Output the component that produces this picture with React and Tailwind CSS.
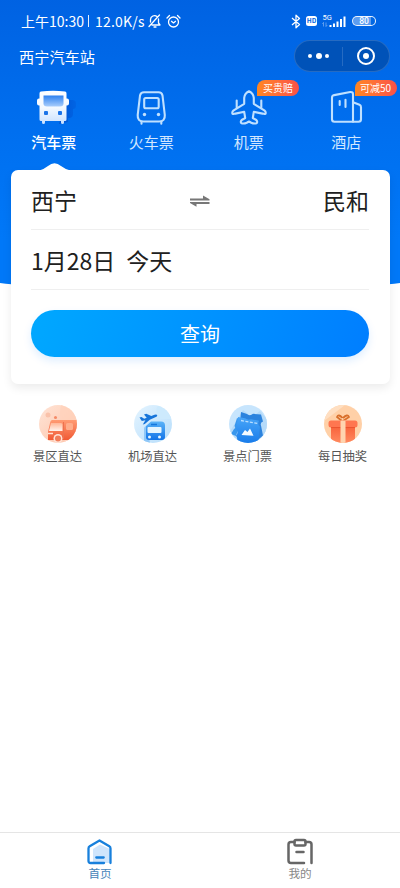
import React from "react";

function BusIcon() {
  return (
    <svg width="44" height="38" viewBox="32 89 44 38" fill="none">
      <defs>
        <linearGradient id="busBody" x1="0" y1="0" x2="0" y2="1">
          <stop offset="0" stopColor="#ffffff" />
          <stop offset="0.5" stopColor="#f4f9ff" />
          <stop offset="1" stopColor="#c9e0ff" />
        </linearGradient>
        <linearGradient id="busGlass" x1="0" y1="0" x2="0" y2="1">
          <stop offset="0" stopColor="#2f82ef" />
          <stop offset="1" stopColor="#a8cdfc" />
        </linearGradient>
        <linearGradient id="busShade" x1="0" y1="0" x2="1" y2="0">
          <stop offset="0" stopColor="#0049c8" />
          <stop offset="1" stopColor="#0062e2" />
        </linearGradient>
      </defs>
      <path d="M66 100h6.500a3.500 3.500 0 0 1 3.500 3.500v2.500a3 3 0 0 1-3 3v5a4 4 0 0 1-4 4h-1v4l-9 2z" fill="url(#busShade)" opacity=".75" />
      <path d="M41 91.500q12-1.500 24 0 1.500.2 1.500 2v5h.5q2 0 2 2v3q0 2-2 2h-.5v14q0 1.500-1.500 1.500h-1v1.500q0 1.500-1.500 1.500t-1.500-1.500V121H45v1.500q0 1.500-1.500 1.500t-1.500-1.500V121h-1q-1.500 0-1.500-1.500v-14H39q-2 0-2-2v-3q0-2 2-2h.5v-5q0-1.800 1.500-2z" fill="url(#busBody)" />
      <path d="M43.500 95.500h20v8q0 3-3.500 3H47q-3.500 0-3.500-3z" fill="url(#busGlass)" />
      <rect x="44" y="111" width="4" height="4" rx="1" fill="#1b73e8" />
      <rect x="58" y="111" width="4" height="4" rx="1" fill="#1b73e8" />
    </svg>
  );
}

function TrainIcon() {
  return (
    <svg width="34" height="38" viewBox="134 89 34 38" fill="none" stroke="#bfe0ff" strokeWidth="2.100" strokeLinecap="round" strokeLinejoin="round">
      <path d="M144 92.200h14.500q3.300 0 4 3.300l2.300 19.500q.4 6.500-5.800 6.500h-15.500q-6.200 0-5.800-6.500L140 95.500q.7-3.300 4-3.300z" />
      <rect x="144.200" y="98" width="14.500" height="10.300" rx="1.500" />
      <path d="M141.500 121.500v2.300M161.300 121.500v2.300" />
      <circle cx="144.500" cy="114.500" r="1.700" fill="#bfe0ff" stroke="none" />
      <circle cx="158.500" cy="114.500" r="1.700" fill="#bfe0ff" stroke="none" />
    </svg>
  );
}

function PlaneIcon() {
  return (
    <svg width="38" height="38" viewBox="231 89 38 38" fill="none" stroke="#bfe0ff" strokeWidth="2.100" strokeLinecap="round" strokeLinejoin="round">
      <path d="M250 91.300q-4.300 2-4.800 6.500v6l-10.500 6.500q-2 1.800-1.200 3.500 1 .5 3-.2l8.700-1.800 1 6.200-3.500 2q-1.700 2-.2 3.200 2.500.8 5.200-.5l2.300-1.200 2.300 1.200q2.700 1.300 5.200.5 1.500-1.200-.2-3.200l-3.500-2 1-6.200 8.700 1.800q2 .7 3 .2.800-1.700-1.200-3.500l-10.500-6.500v-6q-.5-4.500-4.800-6.500z" />
      <path d="M237.700 100.500v7M262.300 100.500v7" />
    </svg>
  );
}

function HotelIcon() {
  return (
    <svg width="34" height="38" viewBox="328 89 34 38" fill="none" stroke="#bfe0ff" strokeWidth="2.100" strokeLinecap="round" strokeLinejoin="round">
      <path d="M352 121.700h-18.500q-2.500 0-2.500-2.500V97.700q0-2.100 2.200-2.600l16-3.100q2.800-.3 2.800 2.300z" />
      <path d="M352 102.300l6.500 2.500q1.500.6 1.500 2.400v12q0 2.500-2.500 2.500H352" />
      <path d="M338.700 101v4M344.500 99.800v7.200" />
    </svg>
  );
}

function Coach() {
  return (
    <svg width="38" height="38" viewBox="0 0 38 38">
      <defs>
        <linearGradient id="coachBg" x1="0" y1="0" x2="1" y2="1"><stop stopColor="#ffe4d6" /><stop offset="1" stopColor="#fdc3a8" /></linearGradient>
        <linearGradient id="coachBody" x1="0" y1="0" x2="0" y2="1"><stop stopColor="#ff9b73" /><stop offset="1" stopColor="#f15a35" /></linearGradient>
        <linearGradient id="coachGlass" x1="0" y1="0" x2="0" y2="1"><stop stopColor="#ffb798" /><stop offset="1" stopColor="#fff3ed" /></linearGradient>
        <clipPath id="round1"><circle cx="19" cy="19" r="19" /></clipPath>
      </defs>
      <g clipPath="url(#round1)">
        <rect width="38" height="38" fill="url(#coachBg)" />
        <path d="M22 0h16v18H24q-5-5-2-18z" fill="#ffd2bb" opacity=".7" />
        <circle cx="9" cy="10" r="2.500" fill="#fac2aa" />
        <circle cx="16.500" cy="12.500" r="1.500" fill="#f58b68" />
        <path d="M13 15h25v20H9v-8l2-9q.5-3 2-3z" fill="url(#coachBody)" />
        <path d="M12 18h10q1.500 0 1.500 1.500V26H10z" fill="url(#coachGlass)" />
        <rect x="27" y="18" width="7" height="7" rx="1.500" fill="#ffad8b" />
        <path d="M24.500 17v17" stroke="#ed714f" />
        <path d="M9 28.500h5" stroke="#ffe4d7" strokeWidth="1.500" />
        <circle cx="19" cy="33.500" r="4.500" fill="#ffe3d7" />
        <circle cx="19" cy="33.500" r="3" fill="#f17b58" />
        <path d="M26 35h12v3H24z" fill="#ffd3c0" />
      </g>
    </svg>
  );
}

function Airport() {
  return (
    <svg width="38" height="38" viewBox="0 0 38 38">
      <defs>
        <linearGradient id="airBg" x1="0" y1="0" x2="1" y2="1"><stop stopColor="#e4f4ff" /><stop offset="1" stopColor="#b6ddfb" /></linearGradient>
        <linearGradient id="airBody" x1="0" y1="0" x2="0" y2="1"><stop stopColor="#5bb3f8" /><stop offset="1" stopColor="#1274e8" /></linearGradient>
        <clipPath id="round2"><circle cx="19" cy="19" r="19" /></clipPath>
      </defs>
      <g clipPath="url(#round2)">
        <rect width="38" height="38" fill="url(#airBg)" />
        <path d="M24 0q-4 7 2 14h12V0z" fill="#cdeafd" />
        <path d="M13 21q-3 0-3 3v14h6z" fill="#90c8f8" />
        <path d="M17 16.500h10q4 0 4 4V32q0 3-3 3H15q-3 0-3-3V21z" fill="url(#airBody)" />
        <path d="M17 19.500h6" stroke="#1677dc" strokeWidth="1.500" />
        <rect x="13.500" y="22" width="14" height="6" rx="1" fill="#e5f5ff" />
        <circle cx="15.500" cy="32" r="1.500" fill="#e7f6ff" /><circle cx="25.500" cy="32" r="1.500" fill="#e7f6ff" />
        <path d="M5.500 12.500l2-.5 2.700 1.700 2.500-1-2.700-3.200 2.300-.8 5 2.300 3.200-1.300q2.500-.7 2.800.7 0 1-2 1.800l-5.500 2.600-5 4.200-2 .5 2.600-4.200-3.600.7z" fill="#1775da" />
      </g>
    </svg>
  );
}

function Ticket() {
  return (
    <svg width="38" height="38" viewBox="0 0 38 38">
      <defs>
        <linearGradient id="ticketBody" x1="0" y1="0" x2="0" y2="1"><stop stopColor="#48a5f8" /><stop offset="1" stopColor="#187bea" /></linearGradient>
        <clipPath id="round3"><circle cx="19" cy="19" r="19" /></clipPath>
      </defs>
      <g clipPath="url(#round3)">
        <rect width="38" height="38" fill="#c7e5fd" />
        <path d="M0 28L14 5l9 7 8-6 7 8v24H0z" fill="#b5daf9" />
        <path d="M8 13l4 2-5 16-5-2 3-5q2-1 .5-3z" fill="#3997ed" />
        <path d="M12 7l6 2q3 2.500 6-.2l8 .7 2 7q-3 1-2 4l2 10-7 6-17-8z" fill="#2c83de" />
        <path d="M9 12l7 1.200q3 2.300 6 1l8 1.500q-2 4 1 6l-2 17H8q1-6-1-8 3-3 0-7z" fill="url(#ticketBody)" />
        <path d="M12 15.500l17 3" stroke="#b9deff" strokeWidth="1.300" strokeDasharray="3 1.500" />
        <path d="M12.500 30l3.500-5 2.500 2 2.500-3.500 3.500 7.300z" fill="#f4faff" />
      </g>
    </svg>
  );
}

function Gift() {
  return (
    <svg width="38" height="38" viewBox="0 0 38 38">
      <defs>
        <linearGradient id="giftBody" x1="0" y1="0" x2="0" y2="1"><stop stopColor="#f75f38" /><stop offset="1" stopColor="#ff8a60" /></linearGradient>
        <clipPath id="round4"><circle cx="19" cy="19" r="19" /></clipPath>
      </defs>
      <g clipPath="url(#round4)">
        <rect width="38" height="38" fill="#ffd0a7" />
        <path d="M0 16Q12 7 21 0H0z" fill="#ffdfc2" />
        <path d="M18 16l-5-4q1.500-3.500 5.500 1M19 16l6-4q-1.500-3.500-6 1" fill="none" stroke="#d9702c" strokeWidth="1.800" />
        <rect x="7" y="20" width="24" height="18" fill="url(#giftBody)" />
        <rect x="4.500" y="15.500" width="29" height="7" rx="2.500" fill="#ff7650" />
        <path d="M7 22.500h24" stroke="#e74e2b" strokeWidth=".8" />
        <path d="M16.500 15.500h5V38h-5z" fill="#ffd4af" />
      </g>
    </svg>
  );
}

const tabs = [
  { label: "汽车票", Icon: BusIcon, active: true },
  { label: "火车票", Icon: TrainIcon },
  { label: "机票", Icon: PlaneIcon, badge: "买贵赔" },
  { label: "酒店", Icon: HotelIcon, badge: "可减50" },
];

const services = [
  { label: "景区直达", Icon: Coach },
  { label: "机场直达", Icon: Airport },
  { label: "景点门票", Icon: Ticket },
  { label: "每日抽奖", Icon: Gift },
];

function StatusBar() {
  return (
    <div className="flex h-[40px] items-center justify-between pl-[21px] pr-[24px] pt-[2px] text-white">
      <div className="flex items-center">
        <span className="w-[62px] whitespace-nowrap text-[14px] leading-5">上午10:30</span>
        <span className="ml-[5px] h-[12px] w-px bg-white/90" />
        <span className="ml-[6px] w-[51px] whitespace-nowrap text-[14px] leading-5 tracking-[0.2px]">12.0K/s</span>
        <svg className="ml-[1px]" width="15" height="16" viewBox="0 0 15 16" fill="none" stroke="#fff" strokeWidth="1.300" strokeLinecap="round" strokeLinejoin="round">
          <path d="M3.500 9V6.500a4 4 0 0 1 6.500-3M11.500 6v4l1.500 2H5M7 14h2M2 13.500L12.500 2" />
        </svg>
        <svg className="ml-[4px]" width="15" height="15" viewBox="0 0 15 15" fill="none" stroke="#fff" strokeWidth="1.300" strokeLinecap="round" strokeLinejoin="round">
          <circle cx="7.500" cy="8" r="5" /><path d="M1 4l2.500-2.500M14 4l-2.500-2.500M5.500 7.300l2 1.600 2-1.600" />
        </svg>
      </div>
      <div className="flex items-center">
        <svg width="10" height="15" viewBox="0 0 10 15" fill="none" stroke="#fff" strokeWidth="1.300" strokeLinejoin="round">
          <path d="M1 4l7.500 6.500L5 13.800V1.200l3.500 3.300L1 11" />
        </svg>
        <span className="ml-[5px] flex h-[10px] w-[11px] items-center justify-center rounded-[2.500px] bg-white text-[6.500px] font-bold text-[#0067e4]">HD</span>
        <svg className="ml-[5px]" width="25" height="16" viewBox="0 0 25 16" fill="#fff">
          <text x="0.500" y="6.500" fontSize="7.500" fontFamily="Roboto, sans-serif">5G</text>
          <path d="M7.500 12h2v2h-2zM11 10.500h2V14h-2zM14.500 8.500h2V14h-2zM18 6h2v8h-2zM21.500 3.500h2V14h-2z" />
          <path d="M1.500 9.500v4M.3 10.800l1.200-1.300M4 9.500v4l1.200-1.300" stroke="#fff" strokeWidth=".6" opacity=".6" fill="none" />
        </svg>
        <span className="ml-[5px] flex h-[10px] w-[24px] items-center justify-center rounded-full border border-white/90 bg-[linear-gradient(90deg,transparent_78%,#ffffff00_78%),linear-gradient(90deg,#5d9df0_80%,#0067e4_80%)] font-[Roboto] text-[8.500px] font-medium leading-none">80</span>
      </div>
    </div>
  );
}

export default function App() {
  return (
    <div className="relative flex h-[888px] w-[400px] flex-col overflow-hidden bg-white font-['Noto_Sans_CJK_SC',sans-serif]">
      <div className="absolute left-[-200px] top-[-255px] h-[550px] w-[800px] rounded-b-[50%_90px] bg-[linear-gradient(180deg,#0062e2_46%,#0070f0_72%,#0078f8_90%)]" />
      <div className="relative flex flex-1 flex-col">
        <StatusBar />
        <header className="flex h-[32px] items-center justify-between pl-[19px] pr-[10px]">
          <h1 className="text-[15.200px] leading-5 text-white">西宁汽车站</h1>
          <div className="flex h-[32px] w-[96px] items-center rounded-full border border-white/15 bg-[#0052b8]">
            <div className="flex w-[47px] items-center justify-center gap-[3.500px]">
              <span className="size-[4px] rounded-full bg-white" />
              <span className="size-[6px] rounded-full bg-white" />
              <span className="size-[4px] rounded-full bg-white" />
            </div>
            <span className="h-[19px] w-px bg-white/15" />
            <div className="flex flex-1 items-center justify-center">
              <span className="flex size-[18px] items-center justify-center rounded-full border-[2.500px] border-white">
                <span className="size-[6px] rounded-full bg-white" />
              </span>
            </div>
          </div>
        </header>

        <nav className="mx-[5px] flex h-[98px] pt-[17px]">
          {tabs.map(({ label, Icon, badge, active }) => (
            <div key={label} className="relative flex flex-1 flex-col items-center">
              <Icon />
              <span className={active ? "mt-[4px] text-[15px] font-medium leading-[22px] text-white" : "mt-[4px] text-[15px] leading-[22px] text-[#d2e8ff]"}>{label}</span>
              {badge && (
                <span className="absolute left-[57px] top-[-9px] flex h-[16px] w-[42px] items-center justify-center whitespace-nowrap rounded-[8px_8px_8px_0] bg-gradient-to-r from-[#ff8620] to-[#fb5047] text-[10px] leading-none text-white">{badge}</span>
              )}
              {active && (
                <svg className="absolute left-[33px] top-[73px]" width="34" height="9" viewBox="0 0 34 9">
                  <path d="M0 9Q5 8 10 4Q16.500-1.500 23 4Q28 8 34 9z" fill="#fff" />
                </svg>
              )}
            </div>
          ))}
        </nav>

        <section className="mx-[10.500px] flex h-[214px] flex-col rounded-[7px] bg-white px-[20.500px] shadow-[0_4px_10px_rgba(0,0,0,0.08)]">
          <div className="flex h-[60px] items-center justify-between border-b border-[#efefef] text-[23px] text-[#202020]">
            <span className="w-[90px] leading-8">西宁</span>
            <svg className="mt-[3px]" width="22" height="12" viewBox="0 0 22 12" fill="#777">
              <path d="M1 3.500h13V.5l6.500 3.700v1.300H1zM1 7h19.500v2H7.500v2.800L1 8z" />
            </svg>
            <span className="w-[90px] text-right leading-8">民和</span>
          </div>
          <div className="flex h-[60px] items-center gap-[11px] border-b border-[#efefef] text-[23px] text-[#202020]">
            <span className="leading-8">1月28日</span>
            <span className="leading-8">今天</span>
          </div>
          <button className="mt-[20px] flex h-[47px] items-center justify-center rounded-full bg-[linear-gradient(105deg,#00a8ff,#007eff)] text-[20px] leading-none text-white shadow-[0_4px_8px_rgba(0,126,255,0.13)]">查询</button>
        </section>

        <section className="mx-[10px] mt-[21px] flex">
          {services.map(({ label, Icon }) => (
            <div key={label} className="flex flex-1 flex-col items-center">
              <Icon />
              <span className="mt-[4px] text-[12.300px] leading-[18px] text-[#555]">{label}</span>
            </div>
          ))}
        </section>
      </div>

      <footer className="relative flex h-[56px] border-t border-[#e5e5e5] bg-white pt-[5px]">
        <div className="flex w-1/2 flex-col items-center">
          <svg width="28" height="28" viewBox="0 0 28 28" fill="none" stroke="#1880dc" strokeWidth="2.300" strokeLinecap="round" strokeLinejoin="round">
            <path d="M7 11l7-4.500L24 11v14H7z" fill="#cfe5fc" stroke="none" />
            <path d="M18 25H4.500q-2 0-2-2V10.500q0-1.500 1.200-2.200L13.500 2.500l9.800 5.800q1.200.7 1.200 2.200V25M10.300 19.500h7.400" />
          </svg>
          <span className="-mt-[1px] text-[11.600px] leading-[17px] text-[#4784b9]">首页</span>
        </div>
        <div className="flex w-1/2 flex-col items-center">
          <svg width="28" height="28" viewBox="0 0 28 28" fill="none" stroke="#666" strokeWidth="2.500" strokeLinecap="round" strokeLinejoin="round">
            <path d="M8.500 4H5Q2.500 4 2.500 6.500v16Q2.500 25 5 25h13M19.500 4H23q2.500 0 2.500 2.500V25" />
            <rect x="8.500" y="2" width="11" height="5.500" rx="1.500" />
            <path d="M10.500 14h7" />
          </svg>
          <span className="-mt-[1px] text-[11.600px] leading-[17px] text-[#888]">我的</span>
        </div>
      </footer>
    </div>
  );
}
